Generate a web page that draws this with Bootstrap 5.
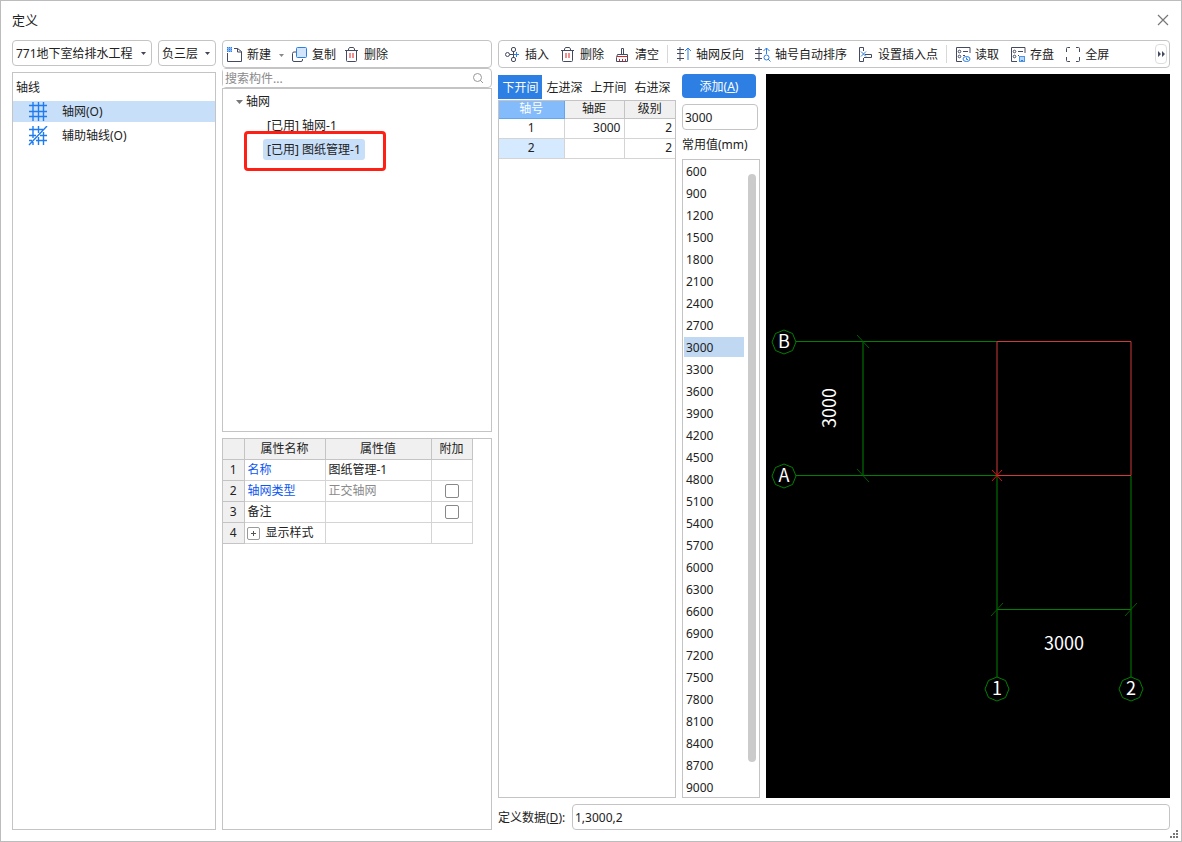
<!DOCTYPE html>
<html lang="zh-CN">
<head>
<meta charset="utf-8">
<meta name="viewport" content="width=device-width, initial-scale=1">
<title>定义</title>
<link href="https://cdn.jsdelivr.net/npm/bootstrap@5.3.0/dist/css/bootstrap.min.css" rel="stylesheet">
<style>
:root { --line: #c4c4c4; --soft: #d4d4d4; --accent: #2d7fe3; --pick: #c8dffa; }
body { font: 12px/16px "Noto Sans", "Noto Sans CJK SC", sans-serif; color: #222; background: #fff; }
button, input, select { font: inherit; color: inherit; }
svg { display: block; flex: none; }
.dialog { border: 1px solid #bcbcbc; padding: 0 11px 11px; }
.titlebar { height: 39px; padding-bottom: 2px; }
.titlebar h1 { font-size: 13px; line-height: 20px; }
.closer { width: 14px; height: 14px; }
.col-types { width: 204px; flex: none; }
.col-items { width: 270px; flex: none; }
.col-spans { width: 178px; flex: none; }
.col-values { width: 78px; flex: none; }
.floor { width: 58px; }
.shrinkable { min-width: 0; min-height: 0; }
.gap-6 { gap: 6px; }
.frame { border: 1px solid var(--line); background: #fff; }
.drop, .field { border: 1px solid var(--line); border-radius: 4px; height: 26px; background-color: #fff; min-width: 0; }
.drop { appearance: none; padding: 1px 3px 0; background: #fff url("data:image/svg+xml,%3Csvg xmlns='http://www.w3.org/2000/svg' width='5' height='3'%3E%3Cpath d='M0 0h5L2.500 3z' fill='%23445'/%3E%3C/svg%3E") no-repeat right 5px center; }
.field { padding: 0 2px; }
.step { width: 76px; }
.strip { border: 1px solid var(--line); border-radius: 4px; height: 28px; }
.tool { border: 0; background: none; padding: 2px 0 0; display: flex; align-items: center; gap: 4px; white-space: nowrap; }
.strip-items { gap: 8px; padding: 0 4px; }
.strip-grid { gap: 11px; padding: 0 2px 0 6px; }
.rule { width: 1px; height: 18px; background: #d8d8d8; flex: none; margin: 0 -3px; }
.more { width: 12px; height: 20px; border: 1px solid #ddd; border-radius: 4px; background: #fff; padding: 0; }
.search { height: 20px; border: 1px solid var(--line); border-radius: 4px; }
.search input { border: 0; outline: 0; padding: 0 2px; height: 18px; min-width: 0; }
.search input::placeholder { color: #8a8a8a; opacity: 1; }
.type-head { padding: 7px 3px 5px; height: 28px; }
.type-row { height: 21px; margin-bottom: 3px; padding: 0 15px; gap: 14px; border: 0; background: none; }
.picked { background: var(--pick); }
.tree { flex: 342 0 0; padding-top: 2px; }
.tree-row { height: 21px; margin-bottom: 3px; }
.tree-root { padding-left: 13px; gap: 3px; }
.tree-leaf { border: 0; background: none; margin-left: 40px; padding: 0 4px; border-radius: 3px; height: 21px; }
.tree-leaf.picked { background: var(--pick); }
.marked { position: relative; }
.marked::after { content: ""; position: absolute; inset: -8px -21px -11px -19px; border: 3px solid #ff2015; border-radius: 4px; pointer-events: none; }
.props { flex: 393 0 0; margin-top: 6px; }
.grid { border-collapse: collapse; table-layout: fixed; }
.grid th, .grid td { font-weight: 400; border: 1px solid var(--soft); padding: 0 3px; overflow: hidden; white-space: nowrap; }
.grid th { background: #f0f0f0; border-color: var(--line); text-align: center; }
.grid tr > :first-child { border-left: 0; }
.grid tr:first-child > * { border-top: 0; }
.grid-props { width: 249px; }
.grid-props tr { height: 21px; }
.grid-props .muted { color: #8a8a8a; }
.grid-props input { appearance: none; width: 14px; height: 14px; border: 1px solid #888; border-radius: 2px; display: block; margin: 0 auto; background: #fff; }
.grid-props .expand-cell { padding-left: 2px; }
.expander { width: 13px; height: 13px; border: 1px solid #999; border-radius: 2px; background: #fff; padding: 2px; }
.link-prop { color: #0b57f0; text-decoration: none; }
.grid-spans { width: 100%; }
.grid-spans tbody tr { height: 20px; }
.grid-spans thead tr { height: 17px; }
.grid-spans th { line-height: 16px; }
.grid-spans tr > :last-child { border-right: 0; }
.grid-spans th.active { background: #84bbfb; border-color: #64a5ef; color: #fff; }
.grid-spans td.active { background: #d5e9ff; }
.tabs { height: 25px; margin-top: 1px; }
.tabs button { border: 0; background: none; padding: 1px 0 0 1px; height: 24px; width: 44px; }
.tabs button.active { background: var(--accent); color: #fff; }
.add { height: 24px; border: 0; border-radius: 4px; background: var(--accent); color: #fff; margin-right: 4px; padding: 2px 0 0; }
.caption-mm { padding-top: 1px; }
.values { overflow: hidden; padding: 1px; }
.values button { height: 20px; border: 0; background: none; padding: 2px 2px 0; margin-bottom: 2px; text-align: left; flex: none; }
.values button.active { background: #c0d8f1; }
.thumb { width: 8px; border-radius: 4px; background: #cbcbcb; margin: 14px 3px 35px; }
.canvas { background: #000; }
.canvas text { font: 18px "Noto Sans CJK SC", sans-serif; fill: #fff; text-anchor: middle; }
.data-label { width: 74px; padding-top: 2px; }
.grip { position: absolute; right: 3px; bottom: 3px; }
</style>
</head>
<body>
<main class="dialog vh-100 d-flex flex-column position-relative">
  <header class="titlebar d-flex align-items-center justify-content-between flex-shrink-0">
    <h1 class="m-0 fw-normal">定义</h1>
    <button class="closer border-0 bg-transparent p-0" aria-label="关闭"><svg width="14" height="14" stroke="#777" stroke-width="1.200"><path d="M2 2l10 10M12 2L2 12"/></svg></button>
  </header>
  <div class="d-flex gap-6 flex-grow-1 shrinkable">

    <section class="col-types d-flex flex-column gap-6">
      <div class="d-flex gap-6">
        <select class="drop flex-grow-1" aria-label="工程"><option>771地下室给排水工程</option></select>
        <select class="drop floor" aria-label="楼层"><option>负三层</option></select>
      </div>
      <div class="frame flex-grow-1 d-flex flex-column">
        <div class="type-head">轴线</div>
        <button class="type-row picked d-flex align-items-center">
          <svg width="20" height="20" stroke="#1f7cf0" stroke-width="1.400"><path d="M5 0v19M10.500 0v19M15.500 0v19M1 3.500h18M1 9.500h18M1 14.500h18"/></svg>轴网(O)</button>
        <button class="type-row d-flex align-items-center">
          <svg width="20" height="20" stroke="#1f7cf0" stroke-width="1.400"><path d="M5 0v12M5 16v3M10.500 0v7M10.500 11v8M15.500 6v13M1 3.500h14M1 9.500h7M12 9.500h7M8 14.500h11M1 14.500h3M1 19L19 0"/></svg>辅助轴线(O)</button>
      </div>
    </section>

    <section class="col-items d-flex flex-column">
      <div class="strip strip-items d-flex align-items-center flex-shrink-0">
        <button class="tool"><svg width="16" height="16" fill="none" stroke="#444a60"><path d="M.5 6v8.500h14V4.500l-4-3H7M10.500 1.500v3.500h4"/><path d="M0 .5h5M0 2.500h5M0 4.500h5" stroke="#2d7fe3" stroke-dasharray="1.500 .5"/><path d="M0 1.500h5M0 3.500h5" stroke="#7fb2f2"/></svg>新建<svg class="ms-1" width="5" height="3" fill="#888"><path d="M0 0h5L2.500 3z"/></svg></button>
        <button class="tool"><svg width="16" height="16" fill="none"><path d="M4 5H2Q.5 5 .5 6.500v6.500Q.5 14.500 2 14.500h7q1.500 0 1.500-1.500V12" stroke="#444a60"/><rect x="4.500" y=".5" width="10" height="10" rx="1" fill="#d3e5fb" stroke="#2d7fe3"/></svg>复制</button>
        <button class="tool"><svg width="16" height="16" fill="none" stroke="#444a60"><path d="M1 3.500h13M2.500 3.500v10q0 1 1 1h8q1 0 1-1v-10M4.500 3.500V2l1-1.500h4l1 1.500v1.500"/><path d="M6 6v5M9 6v5" stroke="#e02020"/></svg>删除</button>
      </div>
      <label class="search d-flex align-items-center flex-shrink-0 pe-2"><input class="flex-grow-1" type="text" placeholder="搜索构件..." aria-label="搜索构件"><svg width="10" height="10" fill="none" stroke="#999"><circle cx="4.500" cy="4.500" r="4"/><path d="M7 7l3 3"/></svg></label>
      <div class="frame tree">
        <div class="tree-row tree-root d-flex align-items-center"><svg width="7" height="4" fill="#777"><path d="M0 0h7L3.500 4z"/></svg>轴网</div>
        <div class="tree-row"><button class="tree-leaf">[已用] 轴网-1</button></div>
        <div class="tree-row"><button class="tree-leaf picked marked">[已用] 图纸管理-1</button></div>
      </div>
      <div class="frame props">
        <table class="grid grid-props">
          <colgroup><col style="width:21px"><col style="width:81px"><col style="width:106px"><col style="width:41px"></colgroup>
          <tr><th></th><th>属性名称</th><th>属性值</th><th>附加</th></tr>
          <tr><th>1</th><td><a class="link-prop" href="#">名称</a></td><td>图纸管理-1</td><td></td></tr>
          <tr><th>2</th><td><a class="link-prop" href="#">轴网类型</a></td><td class="muted">正交轴网</td><td><input type="checkbox" aria-label="附加轴网类型"></td></tr>
          <tr><th>3</th><td>备注</td><td></td><td><input type="checkbox" aria-label="附加备注"></td></tr>
          <tr><th>4</th><td class="expand-cell"><div class="d-flex align-items-center gap-6"><button class="expander" aria-label="展开"><svg width="7" height="7" stroke="#555"><path d="M1 3.500h5M3.500 1v5"/></svg></button>显示样式</div></td><td></td><td></td></tr>
        </table>
      </div>
    </section>

    <section class="d-flex flex-column gap-6 flex-grow-1 shrinkable">
      <div class="strip strip-grid d-flex align-items-center flex-shrink-0">
        <button class="tool"><svg width="16" height="16" fill="none" stroke="#444a60"><circle cx="2.500" cy="7.500" r="2"/><rect x="6.500" y=".5" width="4" height="4" rx="1.500"/><rect x="6.500" y="10.500" width="4" height="4" rx="1.500"/><path d="M8.500 4.500v6M4.500 7.500h4"/><path d="M9 7.500h5M11.500 5v5" stroke="#2d7fe3"/></svg>插入</button>
        <button class="tool"><svg width="16" height="16" fill="none" stroke="#444a60"><path d="M1 3.500h13M2.500 3.500v10q0 1 1 1h8q1 0 1-1v-10M4.500 3.500V2l1-1.500h4l1 1.500v1.500"/><path d="M6 6v5M9 6v5" stroke="#e02020"/></svg>删除</button>
        <button class="tool"><svg width="16" height="16" fill="none" stroke="#444a60"><path d="M6.500 7V1.500h2V7M2.500 7.500h10v7h-11v-4z"/><path d="M2 9.500h10M4.500 12v2M7.500 12v2M10.500 12v2" stroke="#e02020"/></svg>清空</button>
        <span class="rule"></span>
        <button class="tool"><svg width="16" height="16" fill="none" stroke="#444a60"><path d="M4 0v14M1 2.500h7M1 6.500h7M1 11.500h7"/><path d="M12 13V1M9 4l3-3 3 3" stroke="#2d7fe3"/></svg>轴网反向</button>
        <button class="tool"><svg width="16" height="16" fill="none" stroke="#444a60"><path d="M4 0v14M0 2.500h7M0 6.500h7M0 11.500h7"/><path d="M11.500 7V1M8.500 4l3-3 3 3M13 12l2.500 2.500" stroke="#2d7fe3"/><circle cx="11.500" cy="10.500" r="2.500" stroke="#2d7fe3"/></svg>轴号自动排序</button>
        <button class="tool"><svg width="16" height="16" fill="none" stroke="#444a60"><path d="M5.500 4V.5h-4v14h4V11M7 7.500h6.500v3H6"/><path d="M3 4.500l5 5M8 4.500l-5 5" stroke="#2d7fe3"/></svg>设置插入点</button>
        <span class="rule"></span>
        <button class="tool"><svg width="16" height="16" fill="none" stroke="#444a60"><path d="M15 6V.5H1.500v14H7M8 4.500h5M8 8.500h2"/><circle cx="4.500" cy="4.500" r="1.300"/><circle cx="4.500" cy="9.500" r="1.300"/><ellipse cx="11.500" cy="12" rx="3.500" ry="2.500" stroke="#2d7fe3"/><path d="M11.500 10.500v2h1.500" stroke="#2d7fe3"/></svg>读取</button>
        <button class="tool"><svg width="16" height="16" fill="none" stroke="#444a60"><path d="M15 6V.5H1.500v14H7M8 4.500h5M8 8.500h1"/><circle cx="4.500" cy="4.500" r="1.300"/><circle cx="4.500" cy="9.500" r="1.300"/><rect x="9.500" y="9.500" width="5" height="5" stroke="#4d94ea" fill="#b9d5f8"/><path d="M11 13.500h2" stroke="#2d7fe3"/></svg>存盘</button>
        <button class="tool"><svg width="16" height="16" fill="none" stroke="#444a60"><path d="M1.500 5V1.500q0-1 1-1H5M11 .5h2.500q1 0 1 1V5M14.500 10v3.500q0 1-1 1H11M5 14.500H2.500q-1 0-1-1V10"/></svg>全屏</button>
        <button class="more ms-auto" aria-label="更多"><svg width="9" height="6" fill="#444a60" class="mx-auto"><path d="M1 0l3 3-3 3zM5 0l3 3-3 3z"/></svg></button>
      </div>

      <div class="d-flex gap-6 flex-grow-1 shrinkable">
        <div class="col-spans d-flex flex-column">
          <div class="tabs d-flex flex-shrink-0">
            <button class="active">下开间</button><button>左进深</button><button>上开间</button><button>右进深</button>
          </div>
          <div class="frame flex-grow-1">
            <table class="grid grid-spans">
              <colgroup><col style="width:65px"><col style="width:60px"><col></colgroup>
              <thead><tr><th class="active">轴号</th><th>轴距</th><th>级别</th></tr></thead>
              <tbody>
                <tr><td class="text-center">1</td><td class="text-end">3000</td><td class="text-end">2</td></tr>
                <tr><td class="text-center active">2</td><td></td><td class="text-end">2</td></tr>
              </tbody>
            </table>
          </div>
        </div>

        <div class="col-values d-flex flex-column gap-6">
          <button class="add flex-shrink-0">添加(<u>A</u>)</button>
          <input class="field step flex-shrink-0" type="text" value="3000" aria-label="轴距">
          <div class="caption-mm">常用值(mm)</div>
          <div class="frame d-flex flex-grow-1 shrinkable">
            <div class="values d-flex flex-column flex-grow-1" id="common"></div>
            <div class="thumb"></div>
          </div>
        </div>

        <div class="canvas flex-grow-1 d-flex shrinkable">
          <svg viewBox="0 0 404 724" width="100%" height="100%" fill="none" stroke="#008000" role="img" aria-label="轴网预览">
            <path d="M30 267.500H231M30 401.500H231M97 268V402M231 402V603M365 402V603M231 535.500H365"/>
            <path d="M91 261l12 13M91 395l12 13M225 542l12-13M359 542l12-13" stroke="#006000"/>
            <path d="M231 401.500V267.500H365V401.500H231" stroke="#d03a3a"/>
            <path d="M226 396l10 11M236 396l-10 11" stroke="#e01010"/>
            <g><path id="oct" d="M6 268l3.500-8.500L18 256l8.500 3.500L30 268l-3.500 8.500L18 280l-8.500-3.500z"/><use href="#oct" y="134"/><use href="#oct" x="213" y="347"/><use href="#oct" x="347" y="347"/></g>
            <g stroke="none"><text x="18" y="274">B</text><text x="18" y="408">A</text><text x="231" y="621">1</text><text x="365" y="621">2</text><text x="298" y="576">3000</text><text transform="translate(70 334) rotate(-90)">3000</text></g>
          </svg>
        </div>
      </div>

      <div class="d-flex align-items-center flex-shrink-0">
        <label class="data-label" for="data">定义数据(<u>D</u>):</label>
        <input class="field flex-grow-1" id="data" type="text" value="1,3000,2">
      </div>
    </section>
  </div>
  <svg class="grip" width="8" height="8" fill="#777"><path d="M6 0h2v2H6zM3 3h2v2H3zM6 3h2v2H6zM0 6h2v2H0zM3 6h2v2H3zM6 6h2v2H6z"/></svg>
</main>
<script src="https://cdn.jsdelivr.net/npm/bootstrap@5.3.0/dist/js/bootstrap.bundle.min.js"></script>
<script>
const list = document.getElementById("common");
for (let v = 600; v <= 9000; v += 300) {
  const b = document.createElement("button");
  b.textContent = v;
  if (v === 3000) b.className = "active";
  list.append(b);
}
</script>
</body>
</html>
